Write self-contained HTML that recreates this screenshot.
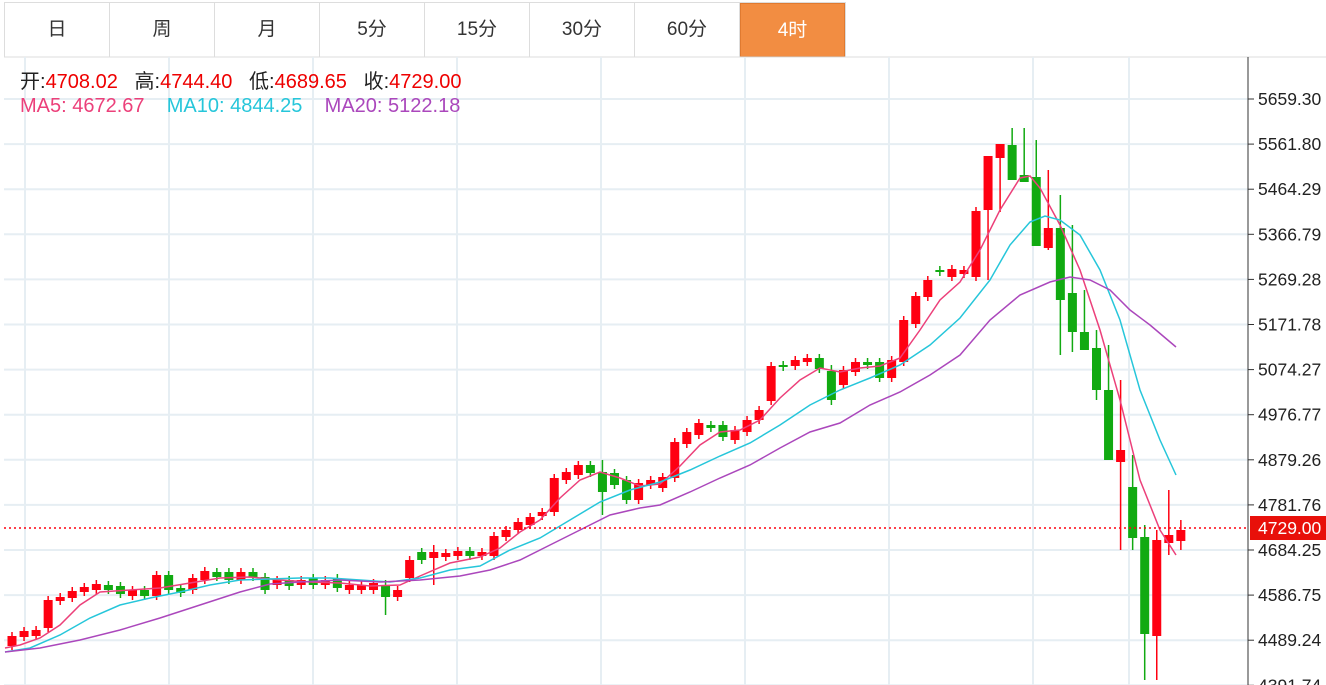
<!DOCTYPE html><html><head><meta charset="utf-8"><style>
body{margin:0;width:1326px;height:685px;overflow:hidden;background:#fff;font-family:"Liberation Sans","Noto Sans CJK SC",sans-serif;position:relative}
.tabs{position:absolute;left:4px;top:2px;height:54px;display:flex;border:1px solid #ddd;border-bottom:none}
.tab{width:105px;height:54px;line-height:54px;text-align:center;font-size:19px;color:#333;border-right:1px solid #ddd;box-sizing:border-box}
.tab.on{background:#f28d42;color:#fff;border:1px solid #e07a30}
.lg{position:absolute;left:20px;font-size:20px;white-space:nowrap}
</style></head><body>
<div class="tabs"><div class="tab">日</div><div class="tab">周</div><div class="tab">月</div><div class="tab">5分</div><div class="tab">15分</div><div class="tab">30分</div><div class="tab">60分</div><div class="tab on">4时</div></div>
<svg id="s" width="1326" height="685" style="position:absolute;left:0;top:0"></svg>
<div class="lg" style="top:65px;color:#222">开:<span style="color:#e00">4708.02</span>&nbsp;&nbsp; 高:<span style="color:#e00">4744.40</span>&nbsp;&nbsp; 低:<span style="color:#e00">4689.65</span>&nbsp;&nbsp; 收:<span style="color:#e00">4729.00</span></div>
<div class="lg" style="top:95px"><span style="color:#ec407a">MA5:&nbsp;4672.67</span>&nbsp;&nbsp;&nbsp; <span style="color:#26c6da">MA10:&nbsp;4844.25</span>&nbsp;&nbsp;&nbsp; <span style="color:#ab47bc">MA20:&nbsp;5122.18</span></div>
<script>
var s='';
s+='<line x1="4" y1="57" x2="1326" y2="57" stroke="#ddd"/>';
[25,169,313,457,601,745,889,1033,1129].forEach(function(x){s+='<line x1="'+x+'" y1="57" x2="'+x+'" y2="685" stroke="#e6eef3" stroke-width="2"/>'});
var labs=["5659.30","5561.80","5464.29","5366.79","5269.28","5171.78","5074.27","4976.77","4879.26","4781.76","4684.25","4586.75","4489.24","4391.74"];
labs.forEach(function(l,i){var y=99+i*45.1;s+='<line x1="4" y1="'+y+'" x2="1248" y2="'+y+'" stroke="#e6eef3" stroke-width="2"/><line x1="1248" y1="'+y+'" x2="1254" y2="'+y+'" stroke="#333"/><text x="1258" y="'+(y+6)+'" font-size="17.5" fill="#222">'+l+'</text>'});
s+='<line x1="1248" y1="57" x2="1248" y2="685" stroke="#333"/>';
var c=[[1,636,646],[1,631,637],[1,630,636],[1,600,628],[1,597,601],[1,591,598],[1,587,592],[1,584,590],[0,585,590],[0,586,594],[1,590,596],[0,590,596],[1,575,596],[0,575,590],[0,588,593],[1,578,590],[1,571,580],[0,572,577],[0,572,580],[1,572,580],[0,572,577],[0,577,590],[1,580,585],[0,580,586],[1,580,585],[0,578,585],[1,580,585],[0,578,588],[1,585,590],[1,585,590],[1,583,590],[0,585,597],[1,590,597],[1,560,578],[0,552,560],[1,552,558],[1,553,557],[1,551,556],[0,551,556],[1,552,556],[1,536,556],[1,530,537],[1,522,530],[1,517,525],[1,512,516],[1,478,512],[1,472,480],[1,465,475],[0,465,473],[0,472,492],[0,473,485],[0,480,500],[1,483,500],[1,480,485],[1,477,488],[1,442,478],[1,432,444],[1,423,435],[0,425,428],[0,425,437],[1,430,440],[1,420,432],[1,410,420],[1,366,401],[0,365,367],[1,360,366],[1,358,362],[0,358,369],[0,371,400],[1,370,385],[1,362,372],[0,362,365],[0,362,378],[1,360,378],[1,320,362],[1,296,324],[1,280,297],[0,270,272],[1,269,277],[1,270,274],[1,211,277],[1,156,210],[1,144,158],[0,145,180],[0,175,182],[0,177,246],[1,228,248],[0,228,300],[0,293,332],[0,332,350],[0,348,390],[0,390,460],[1,450,462],[0,487,538],[0,537,634],[1,540,636],[1,535,543],[1,530,541]];
var wk={81:[205,280],82:[150,212],83:[128,160],84:[128,182],85:[140,185],86:[170,250],87:[195,355],88:[225,352],89:[290,335],90:[330,400],91:[345,430],92:[380,550],93:[455,550],94:[525,680],95:[530,680],96:[490,555],97:[520,550],68:[365,405],49:[460,515],35:[545,585],31:[580,615]};
c.forEach(function(d,i){var x=12+i*12.05;var col=d[0]?'#f01':'#1a1';var w=wk[i]||[d[1]-4,d[2]+4];
s+='<line x1="'+x+'" y1="'+w[0]+'" x2="'+x+'" y2="'+w[1]+'" stroke="'+col+'" stroke-width="1.5"/><rect x="'+(x-4.5)+'" y="'+d[1]+'" width="9" height="'+Math.max(2,d[2]-d[1])+'" fill="'+col+'"/>'});
function pl(p,col){s+='<polyline points="'+p+'" fill="none" stroke="'+col+'" stroke-width="1.5"/>'}
pl("5,648 20,645 40,638 60,625 80,605 100,592 130,590 160,588 190,583 220,578 250,577 280,580 310,582 340,583 370,586 400,585 420,576 450,563 480,557 500,548 520,532 540,520 560,498 580,480 600,472 620,478 640,486 660,484 680,466 700,445 720,432 740,430 760,420 780,398 800,380 820,368 840,372 860,368 880,366 900,358 920,330 940,300 960,282 980,250 1000,210 1020,178 1030,176 1040,188 1060,225 1080,270 1100,330 1120,400 1140,480 1160,530 1176,555","#ec407a");
pl("5,652 30,648 60,635 90,618 120,605 150,598 180,592 210,585 240,580 270,579 300,578 330,578 360,580 390,582 420,578 450,570 480,566 510,550 540,538 570,520 600,502 630,490 660,482 690,470 720,456 750,443 780,425 810,405 840,390 870,378 900,365 930,345 960,318 990,280 1010,245 1030,222 1045,216 1060,220 1080,235 1100,270 1120,320 1140,390 1160,440 1176,475","#26c6da");
pl("5,652 40,648 80,640 120,630 160,618 200,605 240,592 270,584 300,582 340,580 380,582 420,580 460,576 490,570 520,560 550,545 580,530 610,515 640,508 660,505 690,492 720,478 750,465 780,448 810,432 840,423 870,405 900,392 930,375 960,355 990,320 1020,295 1050,282 1070,277 1090,280 1110,290 1130,310 1150,325 1176,347","#ab47bc");
s+='<line x1="4" y1="528" x2="1248" y2="528" stroke="#f01" stroke-dasharray="2,3" stroke-width="1.5"/><rect x="1250" y="516" width="76" height="24" fill="#e8100a"/><text x="1258" y="534" font-size="17.5" fill="#fff">4729.00</text>';
document.getElementById('s').innerHTML=s;
</script></body></html>
